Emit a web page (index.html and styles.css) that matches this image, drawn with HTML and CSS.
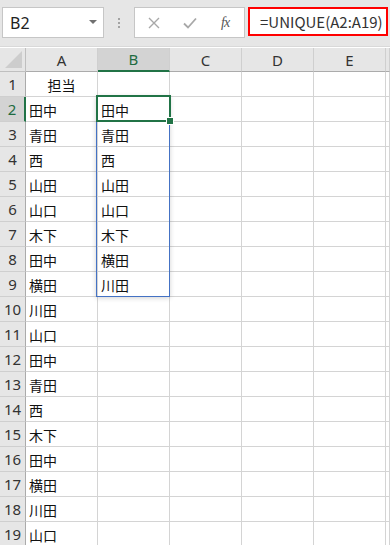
FILE: index.html
```html
<!DOCTYPE html>
<html lang="ja">
<head>
<meta charset="utf-8">
<link rel="stylesheet" href="styles.css">
</head>
<body>
<div class="app">
  <div class="fbar">
    <div class="namebox">
      <span class="nb-text">B2</span>
      <span class="nb-arrow"></span>
    </div>
    <div class="grip"><i></i><i></i><i></i></div>
    <div class="fnbox">
      <svg class="ic ic-x" width="12" height="12" viewBox="0 0 12 12"><path d="M1 1L11 11M11 1L1 11" stroke="#a8a8a8" stroke-width="1.4" fill="none"/></svg>
      <svg class="ic ic-ok" width="14" height="12" viewBox="0 0 14 12"><path d="M1 6.5L5 10.5L13 1.5" stroke="#a8a8a8" stroke-width="1.8" fill="none"/></svg>
      <span class="fx">fx</span>
    </div>
    <div class="formula">=UNIQUE(A2:A19)</div>
  </div>

  <div class="sheet-wrap">
    <div class="sheet">
      <div class="hd corner"><span class="tri"></span></div>
      <div class="hd col">A</div>
      <div class="hd col sel">B</div>
      <div class="hd col">C</div>
      <div class="hd col">D</div>
      <div class="hd col">E</div>
      <div class="hd col"></div>

      <div class="hd row">1</div><div class="c center">担当</div><div class="c"></div><div class="c"></div><div class="c"></div><div class="c"></div><div class="c"></div>
      <div class="hd row sel">2</div><div class="c">田中</div><div class="c">田中</div><div class="c"></div><div class="c"></div><div class="c"></div><div class="c"></div>
      <div class="hd row">3</div><div class="c">青田</div><div class="c">青田</div><div class="c"></div><div class="c"></div><div class="c"></div><div class="c"></div>
      <div class="hd row">4</div><div class="c">西</div><div class="c">西</div><div class="c"></div><div class="c"></div><div class="c"></div><div class="c"></div>
      <div class="hd row">5</div><div class="c">山田</div><div class="c">山田</div><div class="c"></div><div class="c"></div><div class="c"></div><div class="c"></div>
      <div class="hd row">6</div><div class="c">山口</div><div class="c">山口</div><div class="c"></div><div class="c"></div><div class="c"></div><div class="c"></div>
      <div class="hd row">7</div><div class="c">木下</div><div class="c">木下</div><div class="c"></div><div class="c"></div><div class="c"></div><div class="c"></div>
      <div class="hd row">8</div><div class="c">田中</div><div class="c">横田</div><div class="c"></div><div class="c"></div><div class="c"></div><div class="c"></div>
      <div class="hd row">9</div><div class="c">横田</div><div class="c">川田</div><div class="c"></div><div class="c"></div><div class="c"></div><div class="c"></div>
      <div class="hd row">10</div><div class="c">川田</div><div class="c"></div><div class="c"></div><div class="c"></div><div class="c"></div><div class="c"></div>
      <div class="hd row">11</div><div class="c">山口</div><div class="c"></div><div class="c"></div><div class="c"></div><div class="c"></div><div class="c"></div>
      <div class="hd row">12</div><div class="c">田中</div><div class="c"></div><div class="c"></div><div class="c"></div><div class="c"></div><div class="c"></div>
      <div class="hd row">13</div><div class="c">青田</div><div class="c"></div><div class="c"></div><div class="c"></div><div class="c"></div><div class="c"></div>
      <div class="hd row">14</div><div class="c">西</div><div class="c"></div><div class="c"></div><div class="c"></div><div class="c"></div><div class="c"></div>
      <div class="hd row">15</div><div class="c">木下</div><div class="c"></div><div class="c"></div><div class="c"></div><div class="c"></div><div class="c"></div>
      <div class="hd row">16</div><div class="c">田中</div><div class="c"></div><div class="c"></div><div class="c"></div><div class="c"></div><div class="c"></div>
      <div class="hd row">17</div><div class="c">横田</div><div class="c"></div><div class="c"></div><div class="c"></div><div class="c"></div><div class="c"></div>
      <div class="hd row">18</div><div class="c">川田</div><div class="c"></div><div class="c"></div><div class="c"></div><div class="c"></div><div class="c"></div>
      <div class="hd row">19</div><div class="c">山口</div><div class="c"></div><div class="c"></div><div class="c"></div><div class="c"></div><div class="c"></div>
    </div>
    <div class="spill"></div>
    <div class="active"><span class="handle"></span></div>
  </div>
</div>
</body>
</html>
```

FILE: styles.css
```css
html, body {
  margin: 0;
  padding: 0;
  background: #ffffff;
}
body {
  width: 390px;
  height: 545px;
  overflow: hidden;
  font-family: "Noto Sans CJK JP", "Noto Sans", sans-serif;
}
.app {
  width: 390px;
}
.fbar {
  height: 47px;
  background: #e6e6e6;
  border-bottom: 1px solid #d9d9d9;
  box-sizing: border-box;
  display: flex;
  align-items: flex-start;
  padding-top: 7px;
  padding-left: 2px;
}
.namebox {
  width: 102px;
  height: 31px;
  box-sizing: border-box;
  background: #fff;
  border: 1px solid #c6c6c6;
  display: flex;
  align-items: center;
  justify-content: space-between;
  padding: 0 6px 0 7px;
}
.nb-text {
  font-family: "Noto Sans", "Liberation Sans", sans-serif;
  font-size: 16px;
  color: #222;
  line-height: 1;
}
.nb-arrow {
  width: 0;
  height: 0;
  border-left: 4px solid transparent;
  border-right: 4px solid transparent;
  border-top: 4px solid #707070;
  margin-top: -2px;
}
.grip {
  width: 30px;
  height: 31px;
  display: flex;
  flex-direction: column;
  align-items: center;
  justify-content: center;
  gap: 2px;
}
.grip i {
  display: block;
  width: 2px;
  height: 2px;
  background: #a3a3a3;
}
.fnbox {
  width: 111px;
  height: 31px;
  box-sizing: border-box;
  background: #fff;
  border: 1px solid #c6c6c6;
  display: flex;
  align-items: center;
  padding-left: 13px;
}
.ic-x { margin-right: 23px; }
.ic-ok { margin-right: 24px; }
.fx {
  font-family: "Liberation Serif", serif;
  font-style: italic;
  font-size: 14px;
  color: #555;
  letter-spacing: -1px;
}
.formula {
  margin-left: 3px;
  width: 140px;
  height: 29px;
  box-sizing: border-box;
  border: 2px solid #ff0000;
  background: #fff;
  font-family: "Noto Sans CJK JP", "Noto Sans", sans-serif;
  font-size: 15px;
  color: #333;
  line-height: 25px;
  padding-left: 10px;
  white-space: nowrap;
  overflow: hidden;
}
.sheet-wrap {
  position: relative;
  margin-top: 1px;
}
.sheet {
  display: grid;
  grid-template-columns: 26px repeat(5, 72px) 1fr;
  grid-template-rows: 24px repeat(19, 25px);
}
.sheet > div {
  box-sizing: border-box;
  border-right: 1px solid #d4d4d4;
  border-bottom: 1px solid #d4d4d4;
  display: flex;
  align-items: center;
  overflow: hidden;
  white-space: nowrap;
}
.hd {
  background: #e6e6e6;
  font-family: "Noto Sans", "Liberation Sans", sans-serif;
  font-size: 15px;
  color: #333;
  justify-content: center;
}
.sheet > .hd {
  border-color: #bfbfbf;
}
.sheet > .hd.col {
  border-right-color: #cfcfcf;
  border-bottom: 1px solid #ababab;
}
.sheet > .hd.row {
  border-right: 1px solid #ababab;
  border-bottom-color: #cfcfcf;
}
.corner {
  position: relative;
  border-bottom: 1px solid #ababab;
}
.tri {
  position: absolute;
  right: 3px;
  bottom: 3px;
  width: 0;
  height: 0;
  border-left: 17px solid transparent;
  border-bottom: 17px solid #cdcdcd;
}
.sheet > .hd.col.sel {
  background: #d3d3d3;
  color: #1e6b41;
  border-bottom: 2px solid #217346;
}
.sheet > .hd.row.sel {
  background: #d3d3d3;
  color: #1e6b41;
  border-right: 2px solid #217346;
}
.c {
  font-size: 14px;
  color: #111;
  padding-left: 3px;
  padding-top: 1px;
}
.c.center {
  justify-content: center;
  padding-left: 0;
}
.spill {
  position: absolute;
  left: 96px;
  top: 48px;
  width: 74px;
  height: 201px;
  box-sizing: border-box;
  border: 1px solid #4472c4;
  box-shadow: 0 1px 5px rgba(0, 0, 0, 0.18);
  pointer-events: none;
}
.active {
  position: absolute;
  left: 96px;
  top: 47px;
  width: 75px;
  height: 27px;
  box-sizing: border-box;
  border: 2px solid #217346;
  pointer-events: none;
}
.handle {
  position: absolute;
  right: -5px;
  bottom: -5px;
  width: 6px;
  height: 6px;
  background: #217346;
  border: 1px solid #fff;
}
```
